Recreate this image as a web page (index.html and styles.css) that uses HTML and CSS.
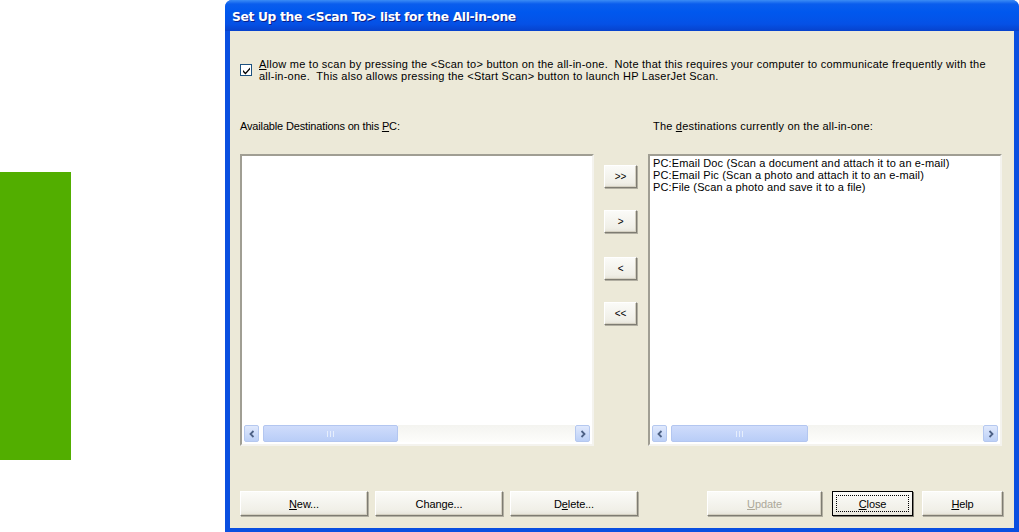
FILE: index.html
```html
<!DOCTYPE html>
<html>
<head>
<meta charset="utf-8">
<link rel="stylesheet" href="styles.css">
</head>
<body>
<div class="page">
  <div class="side"><div class="green"></div></div>
  <div class="window">
    <div class="titlebar"><span class="title">Set Up the &lt;Scan To&gt; list for the All-in-one</span></div>
    <div class="client">
      <div class="checkrow">
        <span class="check"><svg width="9" height="9" viewBox="0 0 9 9"><path d="M1 4 L3.5 6.5 L8 1.5 L8 3.5 L3.5 8.5 L1 6 Z" fill="#000"/></svg></span>
        <p class="checktext"><u>A</u>llow me to scan by pressing the &lt;Scan to&gt; button on the all-in-one.&nbsp; Note that this requires your computer to communicate frequently with the all-in-one.&nbsp; This also allows pressing the &lt;Start Scan&gt; button to launch HP LaserJet Scan.</p>
      </div>
      <div class="lists">
        <div class="col">
          <div class="label">Available Destinations on this <u>P</u>C:</div>
          <div class="listbox">
            <div class="items"></div>
            <div class="hscroll">
              <span class="sbtn"><svg width="8" height="8" viewBox="0 0 8 8"><path d="M5.5 1 L2.5 4 L5.5 7" fill="none" stroke="#4d6185" stroke-width="1.8"/></svg></span>
              <span class="thumb left-thumb"><span class="grip"></span></span>
              <span class="track"></span>
              <span class="sbtn"><svg width="8" height="8" viewBox="0 0 8 8"><path d="M2.5 1 L5.5 4 L2.5 7" fill="none" stroke="#4d6185" stroke-width="1.8"/></svg></span>
            </div>
          </div>
        </div>
        <div class="movebtns">
          <button class="btn small b1">&gt;&gt;</button>
          <button class="btn small b2">&gt;</button>
          <button class="btn small b3">&lt;</button>
          <button class="btn small b4">&lt;&lt;</button>
        </div>
        <div class="col right">
          <div class="label">The <u>d</u>estinations currently on the all-in-one:</div>
          <div class="listbox">
            <div class="items">
              <div class="item">PC:Email Doc (Scan a document and attach it to an e-mail)</div>
              <div class="item">PC:Email Pic (Scan a photo and attach it to an e-mail)</div>
              <div class="item">PC:File (Scan a photo and save it to a file)</div>
            </div>
            <div class="hscroll">
              <span class="sbtn"><svg width="8" height="8" viewBox="0 0 8 8"><path d="M5.5 1 L2.5 4 L5.5 7" fill="none" stroke="#4d6185" stroke-width="1.8"/></svg></span>
              <span class="thumb right-thumb"><span class="grip"></span></span>
              <span class="track"></span>
              <span class="sbtn"><svg width="8" height="8" viewBox="0 0 8 8"><path d="M2.5 1 L5.5 4 L2.5 7" fill="none" stroke="#4d6185" stroke-width="1.8"/></svg></span>
            </div>
          </div>
        </div>
      </div>
      <div class="buttons">
        <div class="group">
          <button class="btn wide"><u>N</u>ew...</button>
          <button class="btn wide">Change...</button>
          <button class="btn wide">D<u>e</u>lete...</button>
        </div>
        <div class="group">
          <button class="btn upd disabled"><u>U</u>pdate</button>
          <button class="btn close"><span class="focus"><u>C</u>lose</span></button>
          <button class="btn help"><u>H</u>elp</button>
        </div>
      </div>
    </div>
  </div>
</div>
</body>
</html>
```

FILE: styles.css
```css
* { box-sizing: border-box; }
html, body { margin: 0; padding: 0; background: #fff; }
body { width: 1019px; height: 532px; overflow: hidden; font-family: "Liberation Sans", Arial, sans-serif; }

.page { display: flex; width: 1019px; height: 532px; }

.side { width: 225px; flex: none; padding-top: 172px; }
.green { width: 71px; height: 288px; background: #52ae00; }

.window {
  width: 794px; height: 532px; flex: none;
  display: flex; flex-direction: column;
  background: #0a4fe0;
  padding: 0 5px 4px 5px;
  border-radius: 7px 7px 0 0;
}
.titlebar {
  height: 31px; flex: none;
  margin: 0 -5px;
  padding: 0 0 0 7px;
  border-radius: 7px 7px 0 0;
  background: linear-gradient(to bottom, #3b8cf5 0px, #0a5ded 4px, #0058ee 12px, #0551e6 24px, #0742cc 31px);
  display: flex; align-items: center;
}
.title {
  color: #fff; font-weight: bold; font-size: 12.3px;
  font-family: "DejaVu Sans", "Liberation Sans", sans-serif;
  letter-spacing: -0.35px;
  text-shadow: 1px 1px 0 #0a1e8a;
  position: relative; top: 1px;
}

.client {
  flex: 1; background: #ece9d8;
  padding: 0 10px;
  display: flex; flex-direction: column;
  font-size: 11px; color: #000;
}

.checkrow { display: flex; align-items: flex-start; margin-top: 27px; }
.check {
  width: 12px; height: 12px; flex: none; margin-top: 6px;
  background: #fff; border: 1px solid #1c5180;
  display: flex; align-items: center; justify-content: center;
}
.checktext { margin: 0 0 0 7px; line-height: 12px; font-size: 11px; width: 735px; letter-spacing: 0.24px; }

.lists { display: flex; margin-top: 38px; }
.col { display: flex; flex-direction: column; width: 354px; }
.col.right { margin-left: 10px; }
.col.right .label { padding-left: 5px; letter-spacing: 0.2px; }
.label { height: 12px; line-height: 12px; font-size: 11px; margin-bottom: 22px; letter-spacing: -0.15px; }

.listbox {
  height: 292px; background: #fff;
  display: flex; flex-direction: column;
  padding: 0 2px 2px 2px;
  border: 2px solid; border-color: #a09e93 #f4f3ee #f4f3ee #a09e93;
}
.items { flex: 1; padding: 1px 1px 0; }
.item { font-size: 11px; line-height: 12px; letter-spacing: 0.15px; white-space: nowrap; }

.hscroll { height: 17px; display: flex; align-items: stretch; background: #fff; }
.sbtn {
  width: 15px; flex: none;
  background: linear-gradient(to bottom, #e0e9fd, #bcd0f6);
  border: 1px solid #b5c8ef; border-radius: 2px;
  display: flex; align-items: center; justify-content: center;
}
.thumb {
  flex: none; margin-left: 4px;
  background: linear-gradient(to bottom, #cfdcfb, #b9cdf7);
  border: 1px solid #b3c6f0; border-radius: 2px;
  display: flex; align-items: center; justify-content: center;
}
.left-thumb { width: 135px; }
.right-thumb { width: 137px; }
.grip { width: 7px; height: 6px; border-left: 1px solid #e6eefc; border-right: 1px solid #e6eefc; position: relative; }
.grip::after { content: ""; position: absolute; left: 2px; top: 0; width: 1px; height: 6px; background: #e6eefc; }
.track { flex: 1; background: linear-gradient(to bottom, #f4f4f0, #fdfdfb); }

.movebtns {
  width: 34px; margin-left: 10px; flex: none;
  display: flex; flex-direction: column;
  padding-top: 45px;
}
.btn {
  font-family: "Liberation Sans", Arial, sans-serif;
  font-size: 11px; color: #000;
  background: linear-gradient(to bottom, #fbfbf8, #f0efe7 80%, #e6e4da);
  border: 1px solid; border-color: #fff #7e7c72 #7e7c72 #fff;
  box-shadow: 1px 1px 0 #b2afa2, inset -1px -1px 0 #d4d0c2;
  padding: 0; letter-spacing: -0.1px;
}
.small { height: 23px; width: 33px; font-size: 10px; }
.b2 { margin-top: 22px; }
.b3 { margin-top: 24px; }
.b4 { margin-top: 22px; }

.buttons { display: flex; justify-content: space-between; margin-top: 45px; }
.group { display: flex; }
.wide { width: 128px; height: 25px; margin-right: 7px; }
.upd { width: 115px; height: 25px; margin-right: 10px; }
.close { width: 81px; height: 25px; margin-right: 9px; border: 1px solid #000; box-shadow: 1px 1px 0 #7e7c72; padding: 3px; }
.help { width: 81px; height: 25px; margin-right: 1px; }
.disabled { color: #aca899; }
.focus { display: flex; align-items: center; justify-content: center; width: 100%; height: 100%; border: 1px dotted #000; }
```
